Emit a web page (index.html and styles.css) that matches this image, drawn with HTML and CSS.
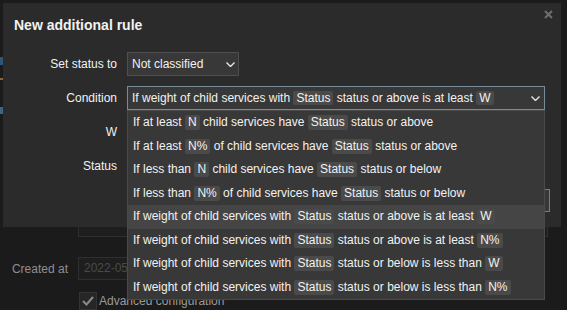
FILE: index.html
```html
<!DOCTYPE html>
<html lang="en">
<head>
    <meta charset="UTF-8">
    <meta name="viewport" content="width=device-width, initial-scale=1.0">
    <title>New additional rule</title>
    <link rel="stylesheet" href="styles.css">
</head>
<body>
    <div class="page">
        <!-- background form, dimmed behind the dialog -->
        <div class="edge">
            <span class="mark"></span>
            <span class="mark mark-orange"></span>
            <span class="mark mark-low"></span>
        </div>
        <div class="bg-form">
            <div class="bg-row">
                <div class="bg-label"></div>
                <div class="bg-textarea"></div>
            </div>
            <div class="bg-row bg-row-date">
                <div class="bg-label">Created at</div>
                <div class="bg-input">2022-05-16 10:42</div>
            </div>
            <div class="bg-row bg-row-check">
                <div class="bg-label"></div>
                <label class="bg-check">
                    <span class="box">
                        <svg width="12" height="10" viewBox="0 0 12 10"><polyline points="1,5 4.5,8.5 11,1" fill="none" stroke="#8a8a8a" stroke-width="2"/></svg>
                    </span>
                    Advanced configuration
                </label>
            </div>
        </div>

        <div class="modal">
            <h2 class="modal-title">New additional rule</h2>
            <svg class="modal-close" width="9" height="9" viewBox="0 0 9 9"><path d="M1 1L8 8M8 1L1 8" stroke="#6e6e6e" stroke-width="2"/></svg>

            <div class="form">
                <div class="form-label">Set status to</div>
                <div class="select select-status">
                    <span>Not classified</span>
                    <svg width="9" height="5" viewBox="0 0 9 5"><polyline points="0.5,0.5 4.5,4.5 8.5,0.5" fill="none" stroke="#e6e6e6" stroke-width="1.4"/></svg>
                </div>

                <div class="form-label">Condition</div>
                <div class="select select-condition">
                    <span>If weight of child services with <span class="tag">Status</span> status or above is at least <span class="tag">W</span></span>
                    <svg width="9" height="5" viewBox="0 0 9 5"><polyline points="0.5,0.5 4.5,4.5 8.5,0.5" fill="none" stroke="#e6e6e6" stroke-width="1.4"/></svg>

                    <ul class="dropdown">
                        <li>If at least <span class="tag">N</span> child services have <span class="tag">Status</span> status or above</li>
                        <li>If at least <span class="tag">N%</span> of child services have <span class="tag">Status</span> status or above</li>
                        <li>If less than <span class="tag">N</span> child services have <span class="tag">Status</span> status or below</li>
                        <li>If less than <span class="tag">N%</span> of child services have <span class="tag">Status</span> status or below</li>
                        <li class="hover">If weight of child services with <span class="tag">Status</span> status or above is at least <span class="tag">W</span></li>
                        <li>If weight of child services with <span class="tag">Status</span> status or above is at least <span class="tag">N%</span></li>
                        <li>If weight of child services with <span class="tag">Status</span> status or below is less than <span class="tag">W</span></li>
                        <li>If weight of child services with <span class="tag">Status</span> status or below is less than <span class="tag">N%</span></li>
                    </ul>
                </div>

                <div class="form-label">W</div>
                <div class="field-empty"></div>

                <div class="form-label">Status</div>
                <div class="field-empty"></div>

                <div class="form-label"></div>
                <div class="field-box"></div>
            </div>
        </div>
    </div>
</body>
</html>
```

FILE: styles.css
```css
body {
    margin: 0;
    background-color: #1b1b1b;
    font-family: "Liberation Sans", Arial, sans-serif;
    font-size: 12px;
    color: #f2f2f2;
    overflow: hidden;
}
.page {
    position: relative;
    width: 567px;
    height: 310px;
    overflow: hidden;
}

/* background page */
.edge {
    height: 180px;
    box-sizing: border-box;
    padding-top: 57px;
    display: flex;
    flex-direction: column;
    align-items: flex-start;
}
.mark {
    width: 3px;
    height: 8px;
    background-color: #2d5576;
}
.mark-orange {
    height: 2px;
    margin-top: 13px;
    background-color: #8a6638;
}
.mark-low {
    height: 7px;
    margin-top: 27px;
    background-color: #3a6684;
}
.bg-row {
    display: flex;
    align-items: center;
    gap: 10px;
}
.bg-label {
    width: 68px;
    flex-shrink: 0;
    text-align: right;
    color: #8f8f8f;
}
.bg-textarea {
    width: 470px;
    height: 57px;
    box-sizing: border-box;
    border: 1px solid #2f2f2f;
    background-color: #1e1e1e;
}
.bg-row-date {
    margin-top: 20px;
}
.bg-input {
    width: 300px;
    height: 23px;
    box-sizing: border-box;
    border: 1px solid #2f2f2f;
    background-color: #1e1e1e;
    padding: 0 5px;
    line-height: 21px;
    color: #4a4a4a;
}
.bg-row-check {
    margin-top: 12px;
}
.bg-check {
    display: flex;
    align-items: center;
    gap: 2px;
    margin-left: 1px;
    color: #9a9a9a;
}
.bg-check .box {
    width: 18px;
    height: 18px;
    box-sizing: border-box;
    border: 1px solid #333;
    background-color: #262626;
    display: flex;
    align-items: center;
    justify-content: center;
}

/* dialog */
.modal {
    position: absolute;
    left: 3px;
    top: 3px;
    width: 558px;
    height: 224px;
    box-sizing: border-box;
    padding: 14px 11px 0 11px;
    background-color: #2b2b2b;
}
.modal-title {
    margin: 0;
    font-size: 14px;
    font-weight: bold;
    line-height: 16px;
}
.modal-close {
    position: absolute;
    right: 8px;
    top: 7px;
}
.form {
    margin-top: 19px;
    display: grid;
    grid-template-columns: 103px 1fr;
    grid-auto-rows: 24px;
    column-gap: 10px;
    row-gap: 10px;
    align-items: center;
}
.form-label {
    text-align: right;
}
.select {
    height: 24px;
    box-sizing: border-box;
    border: 1px solid #4f4f4f;
    background-color: #383838;
    padding: 0 3px 0 4px;
    display: flex;
    align-items: center;
    justify-content: space-between;
    white-space: nowrap;
}
.select-status {
    width: 112px;
}
.select-condition {
    position: relative;
    width: 418px;
    padding-right: 4px;
    border-color: #768d99;
}
.tag {
    display: inline-block;
    padding: 0 3px;
    line-height: 14px;
    border-radius: 2px;
    background-color: #4a4a4a;
}
.dropdown {
    position: absolute;
    top: calc(100% + 1px);
    left: -1px;
    width: 418px;
    box-sizing: border-box;
    margin: 0;
    padding: 0;
    list-style: none;
    border: 1px solid #4a4a4a;
    background-color: #383838;
    z-index: 2;
}
.dropdown li {
    height: 23.5px;
    line-height: 23.5px;
    padding-left: 5px;
}
.dropdown .tag {
    line-height: 15px;
}
.dropdown li.hover {
    background-color: #454545;
}
.field-box {
    align-self: end;
    width: 423px;
    height: 23px;
    margin-top: 14px;
    box-sizing: border-box;
    border: 1px solid #6d7f8a;
    background-color: #383838;
}
```
